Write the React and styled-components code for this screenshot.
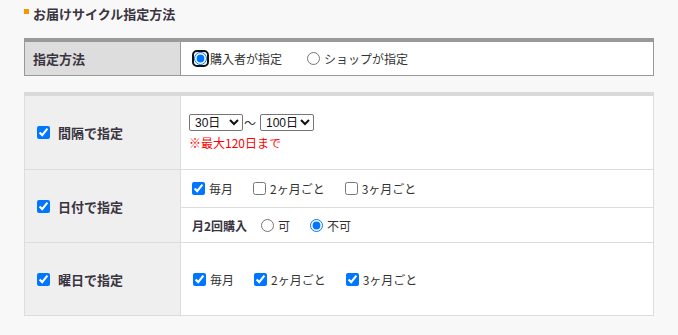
import React from "react";
import styled, { createGlobalStyle } from "styled-components";

const GlobalStyle = createGlobalStyle`
  body {
    margin: 0;
    background: #f8f8f8;
    font-family: "Noto Sans CJK JP", "Noto Sans", sans-serif;
    font-size: 12px;
    color: #333;
  }
`;

const Page = styled.div`
  width: 630px;
  padding: 6px 0 0 24px;
`;

const Title = styled.h2`
  display: flex;
  align-items: center;
  gap: 4px;
  margin: 0 0 17px;
  font-size: 13px;
  line-height: 15px;
  font-weight: bold;
  color: #3a3440;

  &::before {
    content: "";
    width: 5px;
    height: 5px;
    margin-top: -4px;
    background: #f39800;
  }
`;

const Table = styled.div`
  border: 1px solid ${(p) => p.$line};
  border-top: 4px solid ${(p) => p.$top};
  margin-bottom: ${(p) => p.$gap || 0}px;
  background: #fff;
`;

const Row = styled.div`
  display: grid;
  grid-template-columns: 156px 1fr;
  min-height: ${(p) => p.$h}px;

  & + & {
    border-top: 1px solid #ddd;
  }
`;

const Head = styled.div`
  display: flex;
  align-items: center;
  gap: 8px;
  padding-left: ${(p) => (p.$check ? 12 : 8)}px;
  background: ${(p) => p.$bg};
  border-right: 1px solid ${(p) => p.$line};
  font-size: 13px;
  font-weight: bold;
  color: #3a3440;
`;

const Body = styled.div`
  display: flex;
  flex-direction: ${(p) => (p.$stack ? "column" : "row")};
  justify-content: ${(p) => (p.$stack ? "center" : "flex-start")};
  align-items: ${(p) => (p.$stack ? "stretch" : "center")};
  padding-left: ${(p) => p.$pad || 0}px;
`;

const SubRow = styled.div`
  display: flex;
  align-items: center;
  height: ${(p) => p.$h}px;
  padding-left: 11px;

  & + & {
    border-top: 1px solid #ddd;
  }
`;

const Options = styled.div`
  display: flex;
  align-items: center;
  gap: ${(p) => p.$gap}px;
`;

const Choice = styled.label`
  display: flex;
  align-items: center;
  gap: ${(p) => (p.$focus ? 1 : 4)}px;
  white-space: nowrap;
  color: #333;
`;

const Box = styled.input`
  width: 13px;
  height: 13px;
  margin: 0;
  accent-color: #0075ff;
`;

const FocusRing = styled.span`
  display: inline-flex;
  border: 2px solid #111;
  border-radius: 5px;
`;

const SubLabel = styled.span`
  font-weight: bold;
  color: #3a3440;
  margin-right: 14px;
`;

const Range = styled.div`
  display: flex;
  align-items: center;
  gap: 1px;

  span {
    margin-right: 3px;
  }
`;

const Select = styled.select`
  width: 54px;
  height: 17px;
  padding: 0 0 0 1px;
  font-family: "Liberation Sans", "Noto Sans CJK JP", sans-serif;
  font-size: 12px;
  line-height: 14px;
  color: #111;
  border: 1px solid #767676;
  border-radius: 2px;
  background: #fff;
`;

const Note = styled.div`
  margin-top: 3px;
  color: #f00;
  font-size: 12px;
`;

const Check = ({ label, checked }) => (
  <Choice>
    <Box type="checkbox" defaultChecked={checked} />
    {label}
  </Choice>
);

const Radio = ({ name, label, checked, focus }) => {
  const input = <Box type="radio" name={name} defaultChecked={checked} />;
  return (
    <Choice $focus={focus}>
      {focus ? <FocusRing>{input}</FocusRing> : input}
      {label}
    </Choice>
  );
};

const LeftHead = ({ label }) => (
  <Head $check $bg="#efefef" $line="#ddd">
    <Box type="checkbox" defaultChecked />
    {label}
  </Head>
);

export default function App() {
  return (
    <Page>
      <GlobalStyle />
      <Title>お届けサイクル指定方法</Title>

      <Table $line="#999" $top="#999" $gap={16}>
        <Row $h={33}>
          <Head $bg="#ddd" $line="#999">指定方法</Head>
          <Body $pad={11}>
            <Options $gap={25}>
              <Radio name="who" label="購入者が指定" checked focus />
              <Radio name="who" label="ショップが指定" />
            </Options>
          </Body>
        </Row>
      </Table>

      <Table $line="#ddd" $top="#d9d9d9">
        <Row $h={73}>
          <LeftHead label="間隔で指定" />
          <Body $stack $pad={8}>
            <Range>
              <Select defaultValue="30">
                <option value="30">30日</option>
              </Select>
              <span>～</span>
              <Select defaultValue="100">
                <option value="100">100日</option>
              </Select>
            </Range>
            <Note>※最大120日まで</Note>
          </Body>
        </Row>
        <Row $h={72}>
          <LeftHead label="日付で指定" />
          <Body $stack>
            <SubRow $h={37}>
              <Options $gap={20}>
                <Check label="毎月" checked />
                <Check label="2ヶ月ごと" />
                <Check label="3ヶ月ごと" />
              </Options>
            </SubRow>
            <SubRow $h={34}>
              <SubLabel>月2回購入</SubLabel>
              <Options $gap={20}>
                <Radio name="twice" label="可" />
                <Radio name="twice" label="不可" checked />
              </Options>
            </SubRow>
          </Body>
        </Row>
        <Row $h={72}>
          <LeftHead label="曜日で指定" />
          <Body $pad={12}>
            <Options $gap={20}>
              <Check label="毎月" checked />
              <Check label="2ヶ月ごと" checked />
              <Check label="3ヶ月ごと" checked />
            </Options>
          </Body>
        </Row>
      </Table>
    </Page>
  );
}
